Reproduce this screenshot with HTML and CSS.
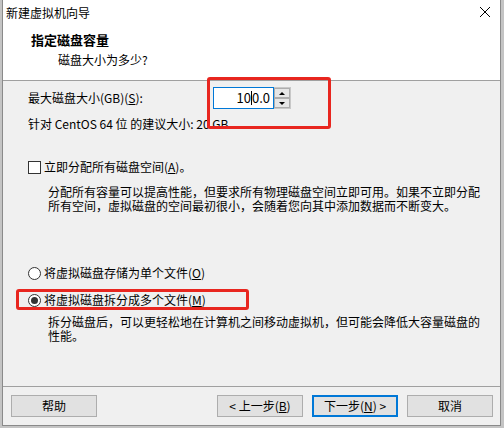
FILE: index.html
```html
<!DOCTYPE html>
<html lang="zh-CN">

<head>
    <meta charset="UTF-8">
    <title>新建虚拟机向导</title>
    <link rel="stylesheet" href="styles.css">
</head>

<body>
    <div class="window">
        <div class="titlebar">
            <span>新建虚拟机向导</span>
            <svg class="close" width="12" height="12" viewBox="0 0 12 12">
                <path d="M1 1 L11 11 M11 1 L1 11" stroke="#000" stroke-width="1" fill="none" />
            </svg>
        </div>

        <div class="header">
            <h1>指定磁盘容量</h1>
            <p>磁盘大小为多少?</p>
        </div>

        <div class="content">
            <div class="size-row">
                <label for="size">最大磁盘大小(GB)(<u>S</u>):</label>
                <div class="spin">
                    <div class="spin-input" id="size">10<span class="caret"></span>0.0</div>
                    <div class="spin-buttons">
                        <div class="spin-btn"><span class="arrow-up"></span></div>
                        <div class="spin-btn"><span class="arrow-down"></span></div>
                    </div>
                </div>
            </div>

            <p class="hint">针对 CentOS 64 位 的建议大小: 20 GB</p>

            <div class="check">
                <span class="box"></span>
                <span>立即分配所有磁盘空间(<u>A</u>)。</span>
            </div>
            <p class="desc">分配所有容量可以提高性能，但要求所有物理磁盘空间立即可用。如果不立即分配<br>所有空间，虚拟磁盘的空间最初很小，会随着您向其中添加数据而不断变大。</p>

            <div class="radio radio-first">
                <span class="dot"></span>
                <span>将虚拟磁盘存储为单个文件(<u>O</u>)</span>
            </div>
            <div class="radio radio-second">
                <span class="dot checked"></span>
                <span>将虚拟磁盘拆分成多个文件(<u>M</u>)</span>
            </div>
            <p class="desc desc-split">拆分磁盘后，可以更轻松地在计算机之间移动虚拟机，但可能会降低大容量磁盘的<br>性能。</p>
        </div>

        <div class="footer">
            <button>帮助</button>
            <div class="spacer"></div>
            <button>&lt; 上一步(<u>B</u>)</button>
            <button class="default">下一步(<u>N</u>) &gt;</button>
            <button>取消</button>
        </div>

        <div class="mark mark-size"></div>
        <div class="mark mark-split"></div>
    </div>
</body>

</html>
```

FILE: styles.css
```css
* {
    box-sizing: border-box;
    margin: 0;
    font-family: "Noto Sans CJK SC", "Liberation Sans", sans-serif;
}

html,
body {
    width: 504px;
    height: 428px;
    overflow: hidden;
}

body {
    margin: 0;
    background: #c4c4c4;
}

u {
    text-decoration: underline;
    text-underline-offset: 1px;
}

.window {
    position: relative;
    margin-left: 2px;
    width: 499px;
    height: 426px;
    background: #f0f0f0;
    border: 1px solid #8a8a8a;
    border-top: none;
    display: flex;
    flex-direction: column;
    font-size: 12px;
    color: #000;
}

.titlebar {
    height: 26px;
    background: #fff;
    display: flex;
    align-items: center;
    padding-left: 3px;
    padding-right: 9px;
    line-height: 16px;
}

.titlebar span {
    flex: 1;
}

.close {
    margin-top: -2px;
}

.header {
    height: 55px;
    background: #fff;
    border-bottom: 1px solid #a0a0a0;
    padding-top: 6px;
}

.header h1 {
    font-size: 13px;
    font-weight: 700;
    line-height: 16px;
    padding-left: 28px;
}

.header p {
    line-height: 16px;
    margin-top: 4px;
    padding-left: 55px;
}

.content {
    flex: 1;
    padding: 6px 0 0 25px;
    border-bottom: 1px solid #a0a0a0;
}

.size-row {
    display: flex;
    align-items: center;
    height: 22px;
}

.size-row label {
    width: 185px;
    line-height: 14px;
}

.spin {
    display: flex;
    height: 22px;
}

.spin-input {
    width: 61px;
    height: 22px;
    background: #fff;
    border: 1px solid #0078d7;
    text-align: right;
    padding-right: 3px;
    font-size: 13px;
    line-height: 20px;
}

.caret {
    display: inline-block;
    width: 1px;
    height: 14px;
    background: #000;
    vertical-align: -2px;
}

.spin-buttons {
    width: 17px;
    display: flex;
    flex-direction: column;
    border: 1px solid #c8c8c8;
    border-left: none;
}

.spin-btn {
    flex: 1;
    background: #e6e6e6;
    border: 1px solid #adadad;
    display: flex;
    align-items: center;
    justify-content: center;
}

.arrow-up,
.arrow-down {
    width: 0;
    height: 0;
    border-left: 3px solid transparent;
    border-right: 3px solid transparent;
}

.arrow-up {
    border-bottom: 3px solid #000;
}

.arrow-down {
    border-top: 3px solid #000;
}

.hint {
    margin-top: 8px;
    line-height: 14px;
}

.check,
.radio {
    display: flex;
    align-items: center;
    gap: 3px;
    line-height: 14px;
    height: 14px;
}

.check {
    margin-top: 29px;
}

.box {
    width: 13px;
    height: 13px;
    background: #fff;
    border: 1px solid #333;
}

.desc {
    line-height: 14px;
    padding-left: 20px;
    margin-top: 11px;
}

.radio-first {
    margin-top: 53px;
}

.radio-second {
    margin-top: 13px;
}

.dot {
    width: 13px;
    height: 13px;
    border-radius: 50%;
    background: #fff;
    border: 1px solid #333;
    display: flex;
    align-items: center;
    justify-content: center;
}

.dot.checked::after {
    content: "";
    width: 7px;
    height: 7px;
    border-radius: 50%;
    background: #333;
}

.desc-split {
    margin-top: 8px;
}

.footer {
    height: 38px;
    display: flex;
    gap: 9px;
    padding: 8px 7px 0 8px;
}

.spacer {
    flex: 1;
}

button {
    width: 86px;
    height: 22px;
    background: #e1e1e1;
    border: 1px solid #adadad;
    font-size: 12px;
    line-height: 18px;
    padding: 0;
    color: #000;
}

button.default {
    border: 2px solid #0078d7;
}

.mark {
    position: absolute;
    border: 3px solid #e8261f;
    border-radius: 3px;
}

.mark-size {
    left: 204px;
    top: 77px;
    width: 124px;
    height: 52px;
}

.mark-split {
    left: 13px;
    top: 289px;
    width: 233px;
    height: 21px;
}
```
